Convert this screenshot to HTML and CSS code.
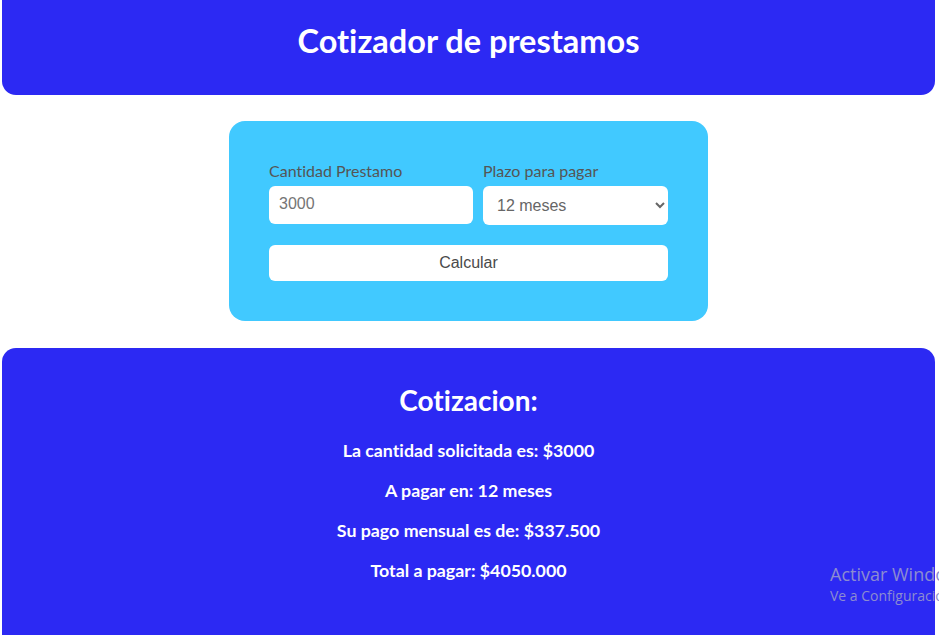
FILE: index.html
```html
<!DOCTYPE html>
<html lang="es">
<head>
<meta charset="utf-8">
<title>Cotizador de prestamos</title>
<link rel="stylesheet" href="styles.css">
</head>
<body>
<div class="page">
  <header class="header">
    <h1 class="title">Cotizador de prestamos</h1>
  </header>

  <main class="main">
    <form class="card">
      <div class="fields">
        <div class="field field-amount">
          <label class="label" for="cantidad">Cantidad Prestamo</label>
          <input class="input" id="cantidad" type="text" value="3000">
        </div>
        <div class="field field-term">
          <label class="label" for="plazo">Plazo para pagar</label>
          <select class="select" id="plazo">
            <option>12 meses</option>
            <option>24 meses</option>
            <option>36 meses</option>
          </select>
        </div>
      </div>
      <button class="button" type="button">Calcular</button>
    </form>
  </main>

  <section class="results">
    <h2 class="results-title">Cotizacion:</h2>
    <p class="results-line">La cantidad solicitada es: $3000</p>
    <p class="results-line">A pagar en: 12 meses</p>
    <p class="results-line">Su pago mensual es de: $337.500</p>
    <p class="results-line">Total a pagar: $4050.000</p>
  </section>

  <div class="watermark">
    <div class="watermark-title">Activar Windows</div>
    <div class="watermark-sub">Ve a Configuración para activar Windows.</div>
  </div>
</div>
</body>
</html>
```

FILE: styles.css
```css
* {
  box-sizing: border-box;
}

html, body {
  margin: 0;
  padding: 0;
  background: #ffffff;
  overflow: hidden;
}

body {
  font-family: Lato, "Open Sans", sans-serif;
  font-variant-ligatures: none;
}

.page {
  padding: 0 4px 0 2px;
  height: 635px;
  overflow: hidden;
  position: relative;
}

.header {
  background: #2c29f3;
  border-radius: 0 0 14px 14px;
  height: 95px;
  display: flex;
  justify-content: center;
  align-items: center;
  padding-bottom: 14px;
}

.title {
  margin: 0;
  color: #ffffff;
  font-size: 32.5px;
  font-weight: 700;
  line-height: 40px;
}

.main {
  display: flex;
  justify-content: center;
  padding: 26px 0 27px;
}

.card {
  width: 479px;
  background: #41c9ff;
  border-radius: 16px;
  padding: 40px;
  display: flex;
  flex-direction: column;
  gap: 20px;
}

.fields {
  display: flex;
  gap: 10px;
}

.field {
  display: flex;
  flex-direction: column;
}

.field-amount {
  width: 204px;
}

.field-term {
  width: 185px;
}

.label {
  color: #555555;
  font-size: 16px;
  line-height: 20px;
  height: 25px;
}

.input,
.select {
  height: 38px;
  border: none;
  border-radius: 6px;
  background: #ffffff;
  font-family: "Liberation Sans", Arial, sans-serif;
  font-size: 16px;
  color: #757575;
  outline: none;
}

.input {
  padding: 0 10px 2px 10px;
}

.select {
  height: 39px;
  padding: 0 10px;
  color: #666666;
}

.button {
  height: 36px;
  border: none;
  border-radius: 6px;
  background: #ffffff;
  font-family: "Liberation Sans", Arial, sans-serif;
  font-size: 16px;
  color: #4a4a4a;
  padding: 0;
}

.results {
  background: #2c29f3;
  border-radius: 14px 14px 0 0;
  height: 300px;
  color: #ffffff;
  text-align: center;
  padding-top: 34px;
}

.results-title {
  margin: 0 0 21px;
  font-size: 28px;
  font-weight: 700;
  line-height: 36px;
}

.results-line {
  margin: 0 0 18px;
  font-size: 17.8px;
  font-weight: 700;
  line-height: 22px;
}

.watermark {
  position: absolute;
  left: 830px;
  top: 562px;
  white-space: nowrap;
  color: #8c8cd0;
  font-family: "Open Sans", "Noto Sans", sans-serif;
}

.watermark-title {
  font-size: 18px;
  line-height: 24px;
}

.watermark-sub {
  font-size: 14px;
  line-height: 20px;
}
```
